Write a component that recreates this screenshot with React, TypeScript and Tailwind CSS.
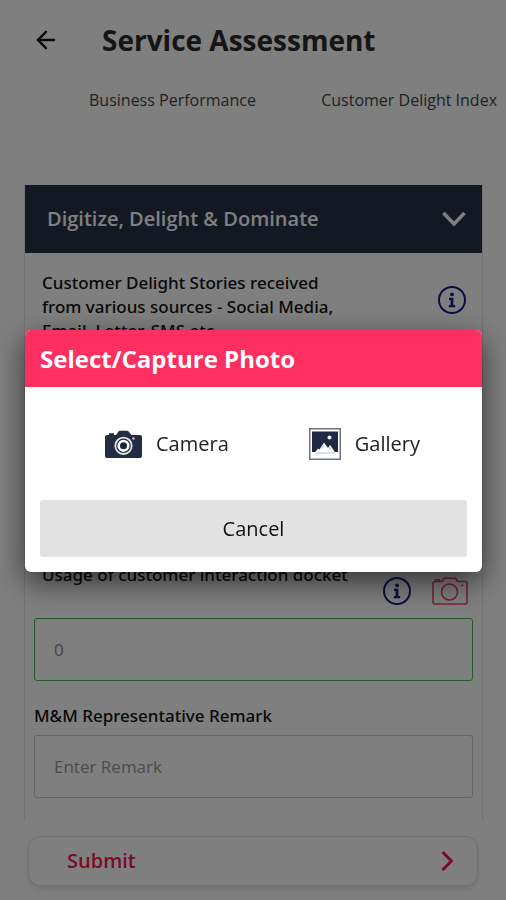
import { useState } from "react";
import { ArrowLeft } from "lucide-react";

interface InfoButtonProps {
  label: string;
}

function InfoButton({ label }: InfoButtonProps) {
  return (
    <button type="button" aria-label={label} className="text-[#1c1a8c]">
      <svg viewBox="0 0 28 28" className="h-7 w-7" fill="none">
        <circle cx="14" cy="14" r="13" stroke="currentColor" strokeWidth="2" />
        <circle cx="14" cy="8.4" r="1.9" fill="currentColor" />
        <path
          d="M11 11.800h4.400v7.200h1.800v2.200h-6.400v-2.200h1.800v-5h-1.600z"
          fill="currentColor"
        />
      </svg>
    </button>
  );
}

function CameraOutline() {
  return (
    <svg
      viewBox="0 0 36 28"
      className="h-7 w-9"
      fill="none"
      stroke="currentColor"
      strokeWidth="1.6"
      strokeLinejoin="round"
      strokeLinecap="round"
    >
      <path d="M3 4.500h7l2-3.300h11.500l2 3.300H33a2 2 0 0 1 2 2V25a2 2 0 0 1-2 2H3a2 2 0 0 1-2-2V6.500a2 2 0 0 1 2-2z" />
      <path d="M3.500 4.200V2.800h4v1.400" />
      <circle cx="17.500" cy="15" r="8" />
      <path d="M29.500 8.500h1.500" />
    </svg>
  );
}

function CameraSolid() {
  return (
    <svg viewBox="0 0 37 28" className="h-7 w-[37px]">
      <path
        d="M2 5h2V3.200h5V5h2l2.500-3.400A2 2 0 0 1 15 .800h7a2 2 0 0 1 1.600.800L26.500 5H35a2 2 0 0 1 2 2v19a2 2 0 0 1-2 2H2a2 2 0 0 1-2-2V7a2 2 0 0 1 2-2z"
        fill="#222d42"
      />
      <circle cx="18.500" cy="15.800" r="8.200" fill="#222d42" stroke="#dfe3ea" strokeWidth="1.800" />
      <circle cx="18.500" cy="15.800" r="4.800" fill="#1b2538" stroke="#fff" strokeWidth="2.600" />
      <circle cx="28.500" cy="8.500" r="1.200" fill="#c5cad3" />
    </svg>
  );
}

function GalleryIcon() {
  return (
    <svg viewBox="0 0 32 32" className="h-8 w-8">
      <rect x=".750" y=".750" width="30.500" height="30.500" fill="#fff" stroke="#6b7280" strokeWidth="1.500" />
      <rect x="3" y="3.500" width="26" height="20.500" fill="#1f2942" />
      <path d="M6 24.500l3-4 1.500 1 4.500-7 4 5.500 2-3 3.500 5 1.500 2.500z" fill="#fff" />
      <path d="M14 16l-1.500 5 2.500-2zM20.500 18l-.500 4 2-1.500z" fill="#c3c8d2" />
      <path d="M7 25h19" stroke="#d3d7de" strokeWidth="1.500" />
      <circle cx="20.500" cy="9.500" r="2" fill="#e6e9ee" />
    </svg>
  );
}

const labelClasses = "font-['Noto_Sans','Open_Sans',sans-serif] text-[17px] leading-6 font-medium";

const fieldClasses =
  "block h-[63px] w-full rounded-[3px] border px-[19px] text-[17px] outline-none";

export default function App() {
  const [dialogOpen, setDialogOpen] = useState(true);
  const closeDialog = () => setDialogOpen(false);

  return (
    <div className="flex min-h-screen flex-col bg-white font-['Open_Sans','Noto_Sans',sans-serif] text-[#111]">
      {/* Header */}
      <header className="flex h-20 items-center gap-[42px] px-8">
        <button type="button" aria-label="Back">
          <ArrowLeft className="h-7 w-7" strokeWidth={2} />
        </button>
        <h1 className="text-[28px] leading-9 font-bold text-[#2a2a2a]">Service Assessment</h1>
      </header>

      {/* Tabs */}
      <nav className="flex h-10 items-center justify-between pr-[9px] pl-[89px] text-base text-[#444]">
        <a href="#performance">Business Performance</a>
        <a href="#delight">Customer Delight Index</a>
      </nav>

      <main className="flex flex-1 pt-[65px] pr-[23px] pl-6">
        <section className="w-full border-x border-[#e6e6e6]">
          <button
            type="button"
            aria-expanded="true"
            className="flex h-[68px] w-full items-center justify-between bg-[#283144] pr-4 pl-[22px] text-white"
          >
            <span className="text-xl font-semibold">Digitize, Delight &amp; Dominate</span>
            <svg viewBox="0 0 24 16" className="h-4 w-6" fill="none" stroke="currentColor" strokeWidth="3.500">
              <path d="M1.500 2L12 13 22.500 2" />
            </svg>
          </button>

          <div className="px-[9px] pt-[18px]">
            <div className="flex items-start justify-between pr-[7px] pl-2">
              <label htmlFor="stories" className={`${labelClasses} w-[310px]`}>
                Customer Delight Stories received from various sources - Social Media, Email, Letter, SMS etc
              </label>
              <div className="pt-[15px]">
                <InfoButton label="About delight stories" />
              </div>
            </div>
            <textarea
              id="stories"
              className="mt-3 block h-[180px] w-full resize-none rounded-[3px] border border-[#ccc]"
            />

            <div className="mt-7 flex items-start justify-between pr-[5px] pl-2">
              <label htmlFor="docket" className={labelClasses}>
                Usage of customer interaction docket
              </label>
              <div className="flex gap-[21px] pt-[14px]">
                <InfoButton label="About the interaction docket" />
                <button
                  type="button"
                  aria-label="Add photo"
                  onClick={() => setDialogOpen(true)}
                  className="text-[#ec466c]"
                >
                  <CameraOutline />
                </button>
              </div>
            </div>
            <input
              id="docket"
              placeholder="0"
              className={`${fieldClasses} mt-[13px] border-[#4caf50] placeholder:text-[#888]`}
            />

            <label htmlFor="remark" className={`${labelClasses} mt-[23px] mb-[7px] block`}>
              M&amp;M Representative Remark
            </label>
            <input
              id="remark"
              placeholder="Enter Remark"
              className={`${fieldClasses} border-[#ccc] placeholder:text-[#999]`}
            />
          </div>
        </section>
      </main>

      <footer className="px-7 pt-[15px] pb-[14px]">
        <button
          type="button"
          className="flex h-[50px] w-full items-center justify-between rounded-xl border border-[#e0e0e0] bg-white pr-6 pl-[38px] text-[#f51450] shadow-md"
        >
          <span className="text-xl font-semibold">Submit</span>
          <svg viewBox="0 0 12 20" className="h-5 w-3" fill="none" stroke="currentColor" strokeWidth="3">
            <path d="M1.500 1l9 9-9 9" />
          </svg>
        </button>
      </footer>

      {/* Photo source dialog */}
      {dialogOpen && (
        <div className="fixed inset-0 flex items-center bg-black/50 pt-0.5 pr-6 pl-[25px]">
          <div
            role="dialog"
            aria-modal="true"
            aria-labelledby="dialog-title"
            className="w-full overflow-hidden rounded-md bg-white shadow-[0_10px_30px_rgba(0,0,0,0.6)]"
          >
            <h2
              id="dialog-title"
              className="flex h-[57px] items-center bg-[#fc2f60] px-[15px] text-2xl font-bold text-white"
            >
              Select/Capture Photo
            </h2>
            <div className="flex h-[113px] items-center justify-between pr-[62px] pl-20 text-[#222]">
              <button type="button" onClick={closeDialog} className="flex items-center gap-[14px] text-xl">
                <CameraSolid />
                Camera
              </button>
              <button type="button" onClick={closeDialog} className="flex items-center gap-[14px] text-xl">
                <GalleryIcon />
                Gallery
              </button>
            </div>
            <div className="px-[15px] pb-[15px]">
              <button
                type="button"
                onClick={closeDialog}
                className="h-[57px] w-full rounded-[3px] bg-[#e2e2e2] text-xl"
              >
                Cancel
              </button>
            </div>
          </div>
        </div>
      )}
    </div>
  );
}
